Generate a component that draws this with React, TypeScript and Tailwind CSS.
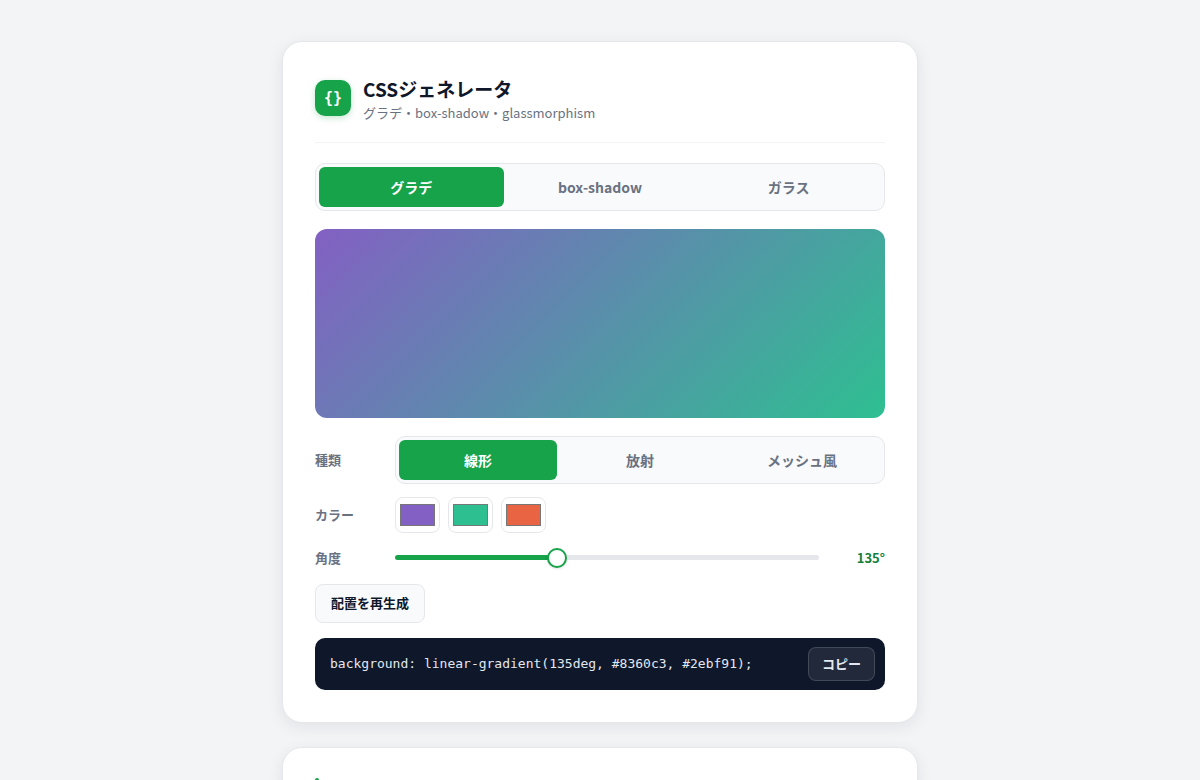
import { useState } from "react";
import type { CSSProperties } from "react";

const tabs = ["グラデ", "box-shadow", "ガラス"];
const types = ["線形", "放射", "メッシュ風"];

type SegmentedProps = {
  label: string;
  items: string[];
  value: string;
  onChange: (value: string) => void;
};

function Segmented({ label, items, value, onChange }: SegmentedProps) {
  return (
    <div
      role="group"
      aria-label={label}
      className="grid flex-1 grid-cols-3 gap-1 rounded-[10px] border border-gray-200 bg-gray-50 p-[3px]"
    >
      {items.map((item) => (
        <button
          key={item}
          type="button"
          aria-pressed={item === value}
          onClick={() => onChange(item)}
          className={`h-10 rounded-md text-sm font-bold ${
            item === value ? "bg-[#16a34a] text-white" : "text-gray-500"
          }`}
        >
          {item}
        </button>
      ))}
    </div>
  );
}

function buildBackground(type: string, colors: string[], angle: number) {
  if (type === "放射") {
    return `radial-gradient(circle, ${colors[0]}, ${colors[1]})`;
  }
  if (type === "メッシュ風") {
    return `radial-gradient(at 20% 20%, ${colors[0]}, transparent 60%), radial-gradient(at 80% 30%, ${colors[1]}, transparent 60%), ${colors[2]}`;
  }
  return `linear-gradient(${angle}deg, ${colors[0]}, ${colors[1]})`;
}

export default function App() {
  const [tab, setTab] = useState("グラデ");
  const [type, setType] = useState("線形");
  const [colors, setColors] = useState(["#8360c3", "#2ebf91", "#e96443"]);
  const [angle, setAngle] = useState(135);

  const background = buildBackground(type, colors, angle);
  const ratio = angle / 360;
  // the thumb is 20px wide, so its centre never reaches the track's ends
  const fill = `calc(${ratio * 100}% + ${(0.5 - ratio) * 20}px)`;

  function setColor(index: number, value: string) {
    setColors(colors.map((color, i) => (i === index ? value : color)));
  }

  return (
    <div className="h-screen overflow-hidden bg-gray-100 font-['Noto_Sans_CJK_JP',sans-serif] text-[#0f172a]">
      <main className="mx-auto flex w-full max-w-[636px] flex-col gap-6 pt-[41px]">
        <section className="rounded-[20px] border border-gray-200 bg-white p-8 shadow-[0_4px_16px_rgba(15,23,42,0.08)]">
          <header className="flex items-start gap-3 border-b border-gray-100 pb-[17px]">
            <div className="mt-1.5 flex size-9 items-center justify-center rounded-[10px] bg-[#16a34a] text-white shadow-[0_2px_6px_rgba(22,163,74,0.25)]">
              <span className="font-['DejaVu_Sans_Mono',monospace] text-[15px] leading-none font-bold">
                {"{}"}
              </span>
            </div>
            <div className="pt-[3px]">
              <h1 className="text-[19px] leading-6 font-bold">CSSジェネレータ</h1>
              <p className="text-[13px] leading-6 text-gray-500">
                グラデ・box-shadow・glassmorphism
              </p>
            </div>
          </header>

          <div className="mt-5 flex">
            <Segmented label="モード" items={tabs} value={tab} onChange={setTab} />
          </div>

          <div
            className="mt-[18px] h-[189px] rounded-xl"
            style={{ background }}
          />

          <div className="mt-[18px] flex items-center">
            <span className="w-20 text-[13px] font-bold text-gray-500">種類</span>
            <Segmented label="種類" items={types} value={type} onChange={setType} />
          </div>

          <div className="mt-[13px] flex items-center">
            <span className="w-20 text-[13px] font-bold text-gray-500">カラー</span>
            <div className="flex gap-2">
              {colors.map((color, index) => (
                <input
                  key={index}
                  type="color"
                  aria-label={`カラー${index + 1}`}
                  value={color}
                  onChange={(e) => setColor(index, e.target.value)}
                  className="h-9 w-[45px] rounded-lg border border-gray-200 bg-white p-0.5"
                />
              ))}
            </div>
          </div>

          <div className="mt-[15px] flex items-center">
            <label htmlFor="angle" className="w-20 text-[13px] font-bold text-gray-500">
              角度
            </label>
            <input
              id="angle"
              type="range"
              min={0}
              max={360}
              value={angle}
              onChange={(e) => setAngle(Number(e.target.value))}
              style={{ "--fill": fill } as CSSProperties}
              className="h-[5px] min-w-0 flex-1 appearance-none rounded-full bg-[linear-gradient(to_right,#16a34a_var(--fill),#e5e7eb_var(--fill))] [&::-webkit-slider-thumb]:size-5 [&::-webkit-slider-thumb]:appearance-none [&::-webkit-slider-thumb]:rounded-full [&::-webkit-slider-thumb]:border-2 [&::-webkit-slider-thumb]:border-[#16a34a] [&::-webkit-slider-thumb]:bg-white [&::-webkit-slider-thumb]:shadow-sm"
            />
            <output
              htmlFor="angle"
              className="w-[66px] text-right text-[13px] font-bold text-[#15803d]"
            >
              {angle}°
            </output>
          </div>

          <button
            type="button"
            className="mt-4 h-[39px] rounded-lg border border-gray-200 bg-gray-50 px-[15px] text-[13px] font-bold"
          >
            配置を再生成
          </button>

          <div className="mt-[15px] flex items-center justify-between rounded-[10px] bg-[#0f172a] py-[9px] pr-[10px] pl-[15px]">
            <code className="font-['DejaVu_Sans_Mono',monospace] text-[13px] text-slate-200">
              background: {background};
            </code>
            <button
              type="button"
              onClick={() => navigator.clipboard.writeText(`background: ${background};`)}
              className="h-[34px] rounded-lg border border-white/15 bg-white/8 px-[13px] text-[13px] font-bold text-slate-200"
            >
              コピー
            </button>
          </div>
        </section>

        <section className="rounded-[20px] border border-gray-200 bg-white px-8 pt-[30px] pb-8 shadow-[0_4px_16px_rgba(15,23,42,0.08)]">
          <div className="h-5 w-1 rounded-full bg-[#16a34a]" />
        </section>
      </main>
    </div>
  );
}
